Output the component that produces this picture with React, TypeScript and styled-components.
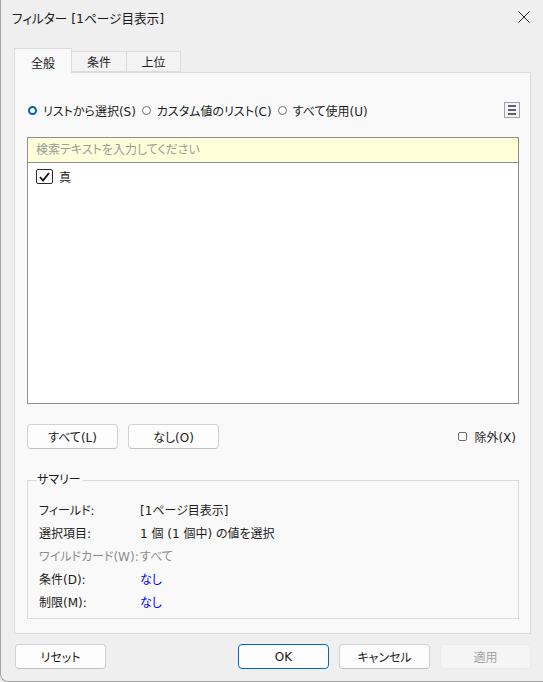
import React from "react";
import styled, { createGlobalStyle } from "styled-components";

const Global = createGlobalStyle`
  html, body { margin: 0; padding: 0; background: #efefef; }
  body {
    font-family: "DejaVu Sans", "Noto Sans CJK JP", sans-serif;
    font-feature-settings: "palt";
    font-size: 12px;
    color: #1c1c1c;
  }
  * { box-sizing: border-box; }
  input, button { font-feature-settings: "palt"; }
`;

const Window = styled.div`
  width: 543px;
  height: 682px;
  background: #efefef;
  border-left: 1px solid #a3a3a3;
  border-bottom: 1px solid #a3a3a3;
  border-bottom-left-radius: 8px;
  display: flex;
  flex-direction: column;
  overflow: hidden;
`;

const TitleBar = styled.div`
  height: 34px;
  flex: none;
  display: flex;
  align-items: center;
  justify-content: space-between;
  padding: 0 13px 0 11px;
  font-size: 12.6px;
  color: #1a1a1a;
`;

const CloseButton = styled.button`
  width: 12px;
  height: 12px;
  padding: 0;
  border: none;
  background: transparent;
  display: flex;
  align-items: center;
  justify-content: center;
`;

const Main = styled.div`
  flex: none;
  padding: 0 12px 0 13px;
  display: flex;
  flex-direction: column;
`;

const TabRow = styled.div`
  margin-top: 14px;
  height: 24px;
  display: flex;
  align-items: flex-end;
  position: relative;
  z-index: 1;
`;

const Tab = styled.div<{ $active?: boolean; $w: number }>`
  width: ${(p) => p.$w}px;
  height: ${(p) => (p.$active ? 25 : 21)}px;
  margin-bottom: ${(p) => (p.$active ? -1 : 0)}px;
  background: ${(p) => (p.$active ? "#f9f9f9" : "#f3f3f3")};
  border: 1px solid #dcdcdc;
  border-bottom: ${(p) => (p.$active ? "none" : "1px solid #dcdcdc")};
  border-left: ${(p) => (p.$active ? "1px solid #dcdcdc" : "none")};
  display: flex;
  align-items: center;
  justify-content: center;
  padding-top: ${(p) => (p.$active ? 2 : 0)}px;
  color: #1c1c1c;
`;

const Panel = styled.div`
  height: 562px;
  background: #f9f9f9;
  border: 1px solid #dcdcdc;
  padding: 0 10px 0 12px;
  display: flex;
  flex-direction: column;
`;

const RadioRow = styled.div`
  margin-top: 29px;
  height: 16px;
  display: flex;
  align-items: center;
  gap: 5px;
`;

const RadioItem = styled.label`
  display: flex;
  align-items: center;
  gap: 6px;
  white-space: nowrap;
`;

const RadioDot = styled.span<{ $on?: boolean }>`
  width: 9px;
  height: 9px;
  border-radius: 50%;
  margin-left: 1px;
  background: #fff;
  border: ${(p) => (p.$on ? "2.5px solid #005fb8" : "1px solid #6f6f6f")};
`;

const MenuButton = styled.div`
  margin-left: auto;
  width: 16px;
  height: 16px;
  border: 1px solid #a2a2a2;
  background: #f4f4f4;
  display: flex;
  flex-direction: column;
  justify-content: center;
  align-items: center;
  gap: 2px;
`;

const MenuLine = styled.span`
  width: 8px;
  height: 2px;
  background: #5b6370;
`;

const ListBox = styled.div`
  margin-top: 19px;
  height: 267px;
  border: 1px solid #8e8e8e;
  background: #fff;
  display: flex;
  flex-direction: column;
  margin-right: 1px;
`;

const Search = styled.input`
  height: 25px;
  border: none;
  border-bottom: 1px solid #8e8e8e;
  background: #ffffd9;
  padding: 0 8px;
  font: inherit;
  outline: none;
  &::placeholder { color: #9a9a9a; }
`;

const Item = styled.div`
  display: flex;
  align-items: center;
  gap: 6px;
  padding: 5px 8px 0 8px;
`;

const CheckBox = styled.span`
  width: 17px;
  height: 15px;
  border: 1px solid #2a2a2a;
  border-radius: 2px;
  background: #fff;
  display: flex;
  align-items: center;
  justify-content: center;
`;

const ButtonRow = styled.div`
  margin-top: 20px;
  height: 25px;
  display: flex;
  align-items: center;
  gap: 10px;
`;

const Button = styled.button<{ $primary?: boolean; $disabled?: boolean }>`
  width: 91px;
  height: 25px;
  border-radius: 4px;
  font: inherit;
  background: ${(p) => (p.$disabled ? "#f5f5f5" : "#fdfdfd")};
  color: ${(p) => (p.$disabled ? "#a3a3a3" : "#1b1b1b")};
  border: 1px solid ${(p) => (p.$primary ? "#0067c0" : p.$disabled ? "#ebebeb" : "#d2d2d2")};
  border-bottom-color: ${(p) => (p.$primary ? "#0067c0" : p.$disabled ? "#ebebeb" : "#c0c0c0")};
  padding: 0;
`;

const Exclude = styled.label`
  margin-left: auto;
  margin-right: 4px;
  display: flex;
  align-items: center;
  gap: 7px;
`;

const SmallBox = styled.span`
  width: 9px;
  height: 9px;
  border: 1px solid #6a6a6a;
  border-radius: 2px;
  background: #fff;
`;

const Group = styled.fieldset`
  margin: 23px 1px 0 0;
  padding: 10px 0 5px 11px;
  border: 1px solid #dadada;
  border-radius: 0;
  min-width: 0;
`;

const Legend = styled.legend`
  padding: 0 2px 0 0;
  margin-left: -2px;
  line-height: 16px;
  color: #1c1c1c;
`;

const SummaryGrid = styled.div`
  display: grid;
  grid-template-columns: 101px 1fr;
  grid-auto-rows: 23px;
  align-items: center;
`;

const Cell = styled.div<{ $tone?: "muted" | "link" }>`
  color: ${(p) => (p.$tone === "muted" ? "#8c8c8c" : p.$tone === "link" ? "#0000ff" : "#1c1c1c")};
  white-space: nowrap;
`;

const Footer = styled.div`
  display: flex;
  gap: 10px;
  padding: 10px 12px 0 14px;
`;

const Spacer = styled.div`
  flex: 1;
`;

export default function App() {
  return (
    <>
      <Global />
      <Window>
        <TitleBar>
          <span>フィルター [1ページ目表示]</span>
          <CloseButton aria-label="閉じる">
            <svg width="12" height="12" viewBox="0 0 12 12">
              <path d="M0.5 0.5 L11.5 11.5 M11.5 0.5 L0.5 11.5" stroke="#222" strokeWidth="1" />
            </svg>
          </CloseButton>
        </TitleBar>
        <Main>
          <TabRow>
            <Tab $active $w={58}>全般</Tab>
            <Tab $w={55}>条件</Tab>
            <Tab $w={54}>上位</Tab>
          </TabRow>
          <Panel>
            <RadioRow>
              <RadioItem>
                <RadioDot $on />
                リストから選択(S)
              </RadioItem>
              <RadioItem>
                <RadioDot />
                カスタム値のリスト(C)
              </RadioItem>
              <RadioItem>
                <RadioDot />
                すべて使用(U)
              </RadioItem>
              <MenuButton>
                <MenuLine />
                <MenuLine />
                <MenuLine />
              </MenuButton>
            </RadioRow>
            <ListBox>
              <Search placeholder="検索テキストを入力してください" />
              <Item>
                <CheckBox>
                  <svg width="11" height="10" viewBox="0 0 11 10">
                    <path d="M1 5 L4 8.5 L10 1" fill="none" stroke="#111" strokeWidth="1.8" />
                  </svg>
                </CheckBox>
                真
              </Item>
            </ListBox>
            <ButtonRow>
              <Button>すべて(L)</Button>
              <Button>なし(O)</Button>
              <Exclude>
                <SmallBox />
                除外(X)
              </Exclude>
            </ButtonRow>
            <Group>
              <Legend>サマリー</Legend>
              <SummaryGrid>
                <Cell>フィールド:</Cell>
                <Cell>[1ページ目表示]</Cell>
                <Cell>選択項目:</Cell>
                <Cell>1 個 (1 個中) の値を選択</Cell>
                <Cell $tone="muted">ワイルドカード(W):</Cell>
                <Cell $tone="muted">すべて</Cell>
                <Cell>条件(D):</Cell>
                <Cell $tone="link">なし</Cell>
                <Cell>制限(M):</Cell>
                <Cell $tone="link">なし</Cell>
              </SummaryGrid>
            </Group>
          </Panel>
        </Main>
        <Footer>
          <Button>リセット</Button>
          <Spacer />
          <Button $primary>OK</Button>
          <Button>キャンセル</Button>
          <Button $disabled>適用</Button>
        </Footer>
      </Window>
    </>
  );
}
